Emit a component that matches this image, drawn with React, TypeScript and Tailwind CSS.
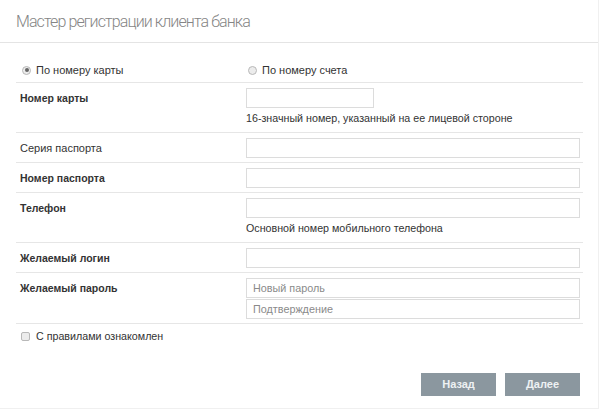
import React from "react";

function Radio({ checked, label }: { checked?: boolean; label: string }) {
  return (
    <div className="flex items-center">
      <span className="ml-[2px] flex h-[9px] w-[9px] items-center justify-center rounded-full border border-[#b8b8b8] bg-[#ececec]">
        {checked && <span className="block h-[4px] w-[4px] rounded-full bg-[#666]" />}
      </span>
      <span className="ml-[5px] text-[11px] text-[#333]">{label}</span>
    </div>
  );
}

function Input({ placeholder, className = "" }: { placeholder?: string; className?: string }) {
  return (
    <div
      className={`flex h-[20px] items-center border border-[#dcdcdc] bg-white pl-[6px] text-[10.8px] text-[#8a8a8a] ${className}`}
    >
      {placeholder}
    </div>
  );
}

function Row({
  label,
  bold = true,
  children,
  pb = "pb-[4px]",
}: {
  label: string;
  bold?: boolean;
  children: React.ReactNode;
  pb?: string;
}) {
  return (
    <div className={`flex border-b border-[#e6e6e6] pt-[5px] ${pb}`}>
      <div className="w-[230px] pl-[4px]">
        <div
          className={`h-[20px] leading-[20px] text-[#333] ${bold ? "text-[10.5px] font-bold" : "text-[11px]"}`}
        >
          {label}
        </div>
      </div>
      <div className="w-[337px] pr-[3px]">{children}</div>
    </div>
  );
}

export default function App() {
  return (
    <div className="h-[418px] w-[600px] bg-white font-['Liberation_Sans',Arial,sans-serif]">
      <div className="h-[409px] w-[599px] border-b border-r border-[#f0f0f0]">
        <div className="flex h-[43px] items-center border-b border-[#e4e4e4] pl-[16px] pt-[2px]">
          <span className="font-['Roboto',sans-serif] text-[16px] font-light tracking-[-0.9px] text-[#858585]">
            Мастер регистрации клиента банка
          </span>
        </div>
        <div className="ml-[16px] w-[567px]">
          <div className="pt-[15px]">
            <div className="flex h-[25px] items-center border-b border-[#e6e6e6]">
              <div className="w-[230px] pl-[4px]">
                <Radio checked label="По номеру карты" />
              </div>
              <Radio label="По номеру счета" />
            </div>
          </div>

          <Row label="Номер карты" pb="pb-[7px]">
            <Input className="w-[128px]" />
            <div className="mt-[3px] text-[10.7px] leading-[14px] text-[#333]">
              16-значный номер, указанный на ее лицевой стороне
            </div>
          </Row>

          <Row label="Серия паспорта" bold={false}>
            <Input />
          </Row>

          <Row label="Номер паспорта">
            <Input />
          </Row>

          <Row label="Телефон" pb="pb-[7px]">
            <Input />
            <div className="mt-[3px] text-[10.7px] leading-[14px] text-[#333]">
              Основной номер мобильного телефона
            </div>
          </Row>

          <Row label="Желаемый логин">
            <Input />
          </Row>

          <Row label="Желаемый пароль">
            <Input placeholder="Новый пароль" />
            <Input placeholder="Подтверждение" className="mt-[1px]" />
          </Row>

          <div className="flex h-[24px] items-center pl-[5px]">
            <span className="block h-[9px] w-[9px] rounded-[2px] border border-[#b8b8b8] bg-[#ececec]" />
            <span className="ml-[6px] text-[10.7px] text-[#333]">С правилами ознакомлен</span>
          </div>

          <div className="mt-[25px] flex justify-end gap-[9px] pr-[3px]">
            <button className="h-[23px] w-[75px] bg-[#8b979f] text-[11px] font-bold text-[#eef1f3]">Назад</button>
            <button className="h-[23px] w-[75px] bg-[#8b979f] text-[11px] font-bold text-[#eef1f3]">Далее</button>
          </div>
        </div>
      </div>
    </div>
  );
}
